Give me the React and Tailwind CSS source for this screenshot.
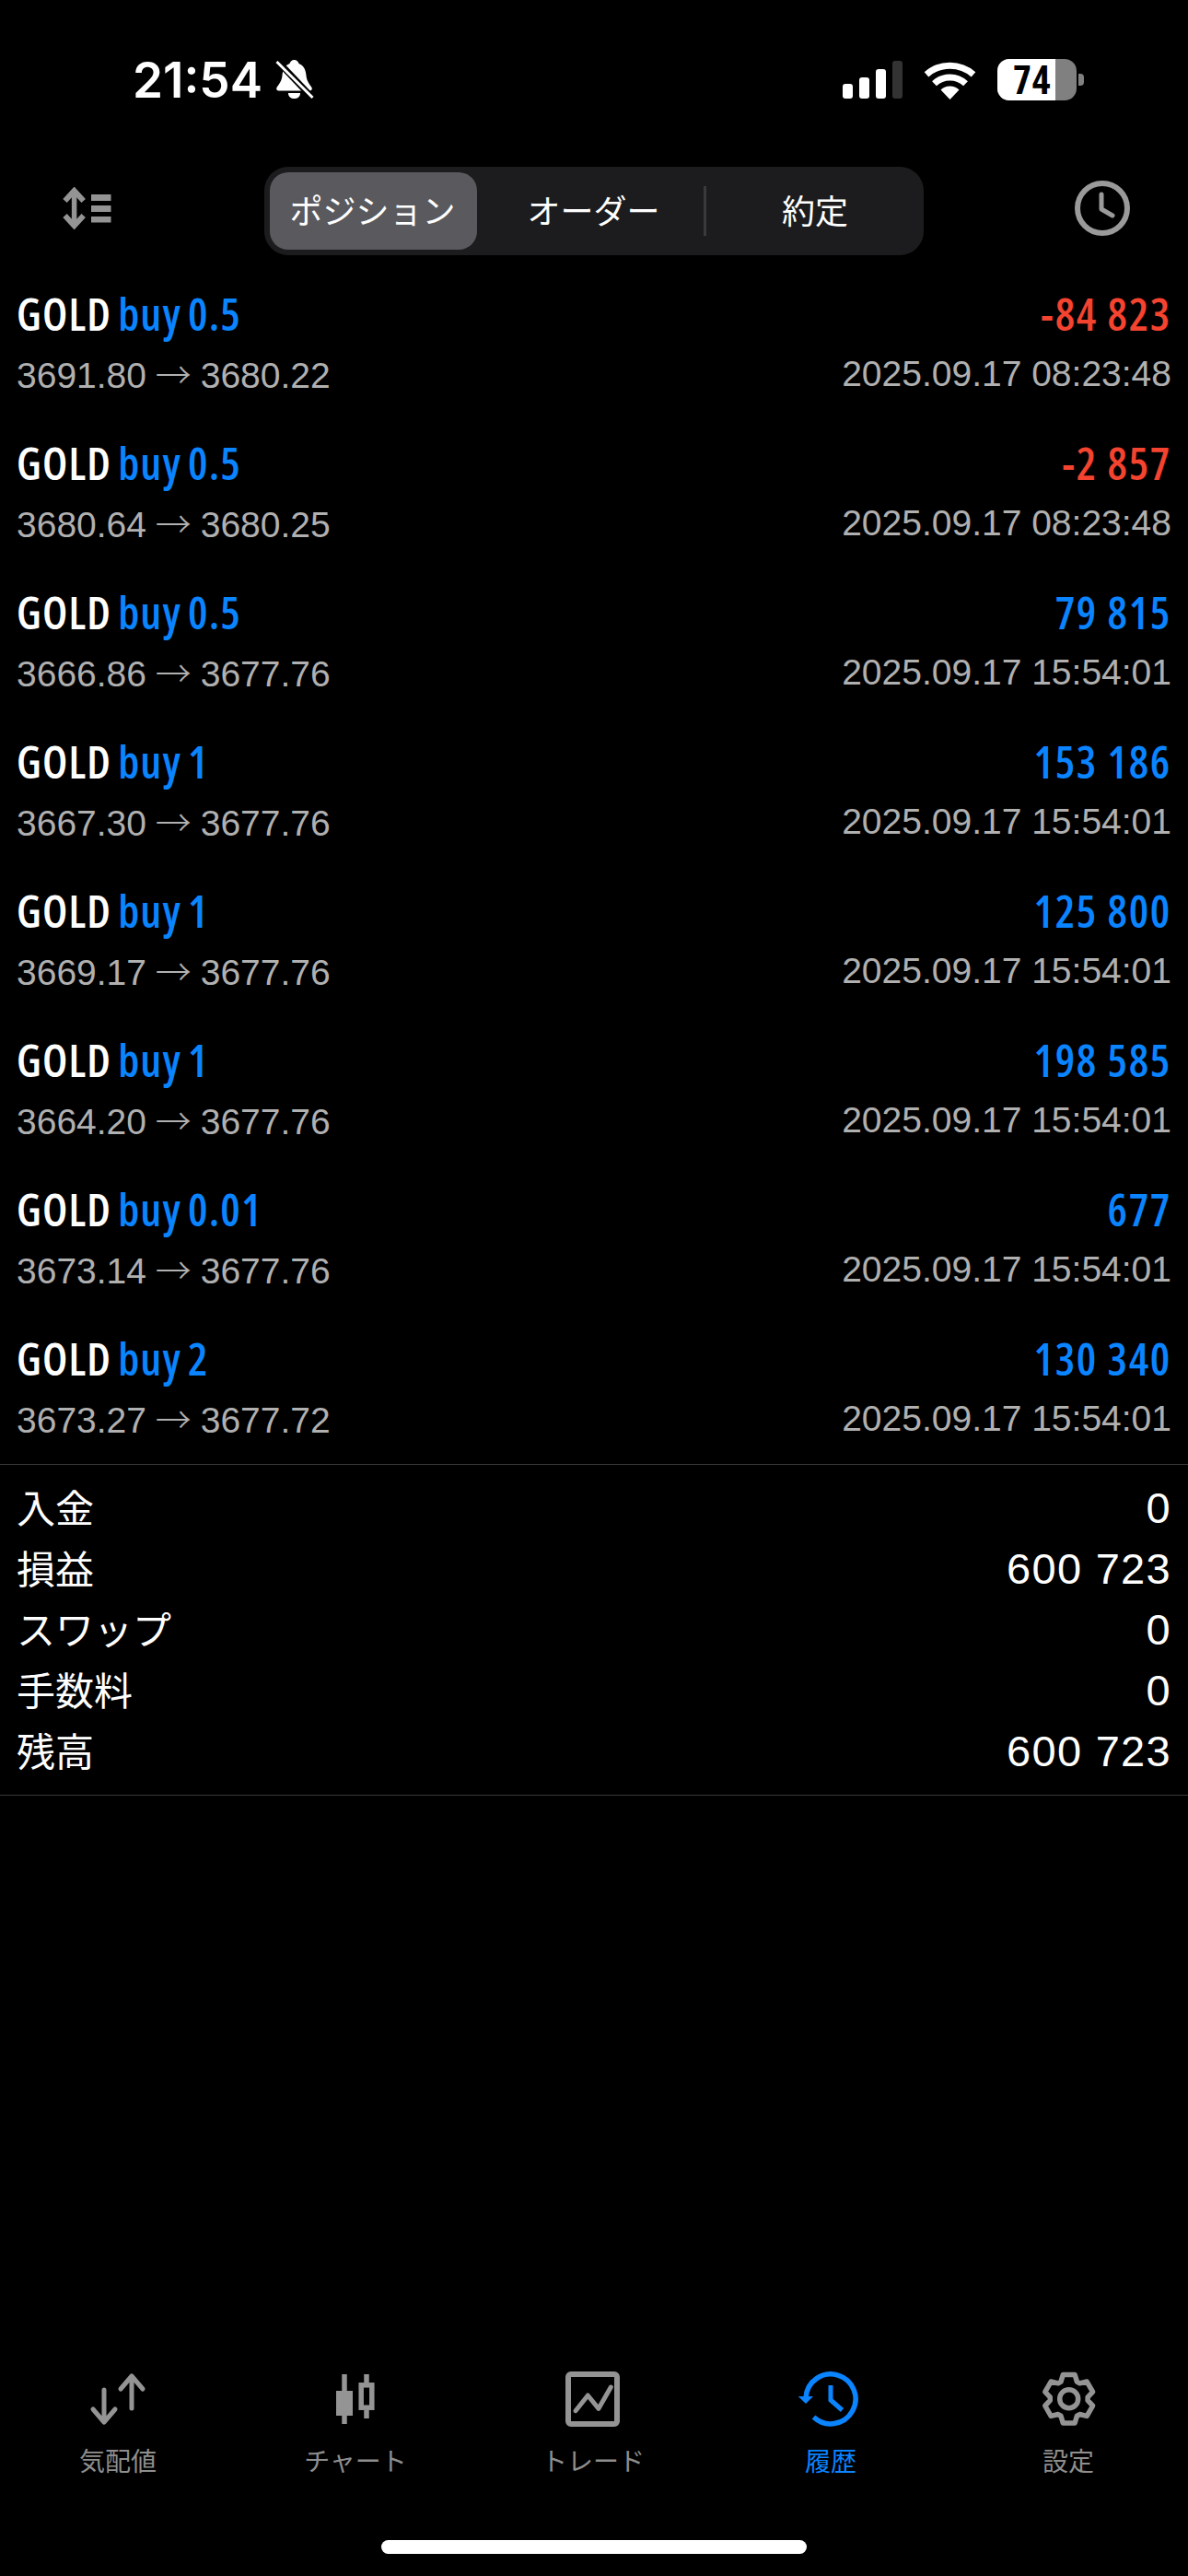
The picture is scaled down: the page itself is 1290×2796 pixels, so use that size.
import React from "react";

const trades = [
  { lot: "0.5", open: "3691.80", close: "3680.22", pnl: "-84 823", time: "2025.09.17 08:23:48" },
  { lot: "0.5", open: "3680.64", close: "3680.25", pnl: "-2 857", time: "2025.09.17 08:23:48" },
  { lot: "0.5", open: "3666.86", close: "3677.76", pnl: "79 815", time: "2025.09.17 15:54:01" },
  { lot: "1", open: "3667.30", close: "3677.76", pnl: "153 186", time: "2025.09.17 15:54:01" },
  { lot: "1", open: "3669.17", close: "3677.76", pnl: "125 800", time: "2025.09.17 15:54:01" },
  { lot: "1", open: "3664.20", close: "3677.76", pnl: "198 585", time: "2025.09.17 15:54:01" },
  { lot: "0.01", open: "3673.14", close: "3677.76", pnl: "677", time: "2025.09.17 15:54:01" },
  { lot: "2", open: "3673.27", close: "3677.72", pnl: "130 340", time: "2025.09.17 15:54:01" },
];

const summary = [
  ["入金", "0"],
  ["損益", "600 723"],
  ["スワップ", "0"],
  ["手数料", "0"],
  ["残高", "600 723"],
];

const GREY = "#949494";
const BLUE = "#0a84ff";

const gearPath = () => {
  const pts = [];
  for (let i = 0; i < 6; i++) {
    const a = (i * Math.PI) / 3 - Math.PI / 2;
    [[-0.44, 20.5], [-0.24, 27], [0.24, 27], [0.44, 20.5]].forEach(([d, r]) => {
      pts.push(`${(39.7 + r * Math.cos(a + d)).toFixed(2)} ${(29.7 + r * Math.sin(a + d)).toFixed(2)}`);
    });
  }
  return "M" + pts.join("L") + "Z";
};

function BellSlash() {
  return (
    <svg width="42" height="44" viewBox="0 0 42 44">
      <path d="M20.500 1C23 1 25 3 25.500 5C31 7 33 12 33.500 18C34 24 37 27 39.500 31C40.500 33 39 34.500 37 34.500H4C2 34.500 .5 33 1.500 31C4 27 7 24 7.500 18C8 12 10 7 15.500 5C16 3 18 1 20.500 1Z" fill="#fff" />
      <path d="M14 37H27C27 41 24 43 20.500 43C17 43 14 41 14 37Z" fill="#fff" />
      <path d="M2 2L40 42" stroke="#000" strokeWidth="7" />
      <path d="M1.500 3L40.500 42" stroke="#fff" strokeWidth="3" />
    </svg>
  );
}

function Signal() {
  return (
    <svg width="65" height="41" viewBox="0 0 65 41">
      <rect x="0" y="25" width="11" height="16" rx="3" fill="#fff" />
      <rect x="18" y="18" width="11" height="23" rx="3" fill="#fff" />
      <rect x="36" y="9" width="11" height="32" rx="3" fill="#fff" />
      <rect x="54" y="0" width="11" height="41" rx="3" fill="#333" />
    </svg>
  );
}

function Wifi() {
  return (
    <svg width="57" height="42" viewBox="0 0 57 42" fill="none" stroke="#fff" strokeWidth="7">
      <path d="M3 14.800A38.500 38.500 0 0 1 54 14.800" />
      <path d="M11.500 24.800A24.500 24.500 0 0 1 45.500 24.800" />
      <path d="M28.500 42L18.500 31.500A14.500 14.500 0 0 1 38.500 31.500Z" fill="#fff" stroke="none" />
    </svg>
  );
}

function Battery() {
  return (
    <div className="flex items-center">
      <div className="relative w-[86px] h-[45px] rounded-[13px] bg-[#808080]">
        <div className="w-[63px] h-full rounded-l-[13px] bg-white" />
        <span className="absolute left-[17px] top-[1px] text-[42px] leading-[42px] font-bold tracking-[1px] text-black font-['Open_Sans',sans-serif] [font-stretch:75%]">74</span>
      </div>
      <div className="ml-[2px] w-[6px] h-[13px] rounded-r-[4px] bg-[#808080]" />
    </div>
  );
}

function SortIcon() {
  return (
    <svg width="53" height="46" viewBox="0 0 53 46" fill="none" stroke={GREY}>
      <path d="M12.600 6V40" strokeWidth="5.500" />
      <path d="M2.500 15L12.600 4L22.700 15" strokeWidth="6" />
      <path d="M2.500 31L12.600 42L22.700 31" strokeWidth="6" />
      <g fill={GREY} stroke="none">
        <rect x="31" y="8" width="21.500" height="7" />
        <rect x="31" y="20" width="21.500" height="7" />
        <rect x="31" y="32" width="21.500" height="6.500" />
      </g>
    </svg>
  );
}

function ClockIcon() {
  return (
    <svg width="60" height="60" viewBox="0 0 60 60" fill="none" stroke="#9a9a9a">
      <circle cx="30" cy="30" r="27" strokeWidth="6" />
      <path d="M29 15V31L41 38" strokeWidth="5" strokeLinecap="round" strokeLinejoin="round" />
    </svg>
  );
}

function QuotesIcon() {
  return (
    <svg width="80" height="60" viewBox="0 0 80 60" fill="none" stroke={GREY} strokeWidth="5" strokeLinecap="round" strokeLinejoin="round">
      <path d="M24 20V54M12 41L24 55L36 41" />
      <path d="M54 40V6M42 19L54 5L66 19" />
    </svg>
  );
}

function ChartIcon() {
  return (
    <svg width="80" height="60" viewBox="0 0 80 60" fill="none" stroke={GREY} strokeWidth="5.500">
      <path d="M27 3V21M27 48V57" />
      <rect x="18" y="21" width="18" height="27" fill={GREY} stroke="none" />
      <path d="M51 3V12M51 42V51" />
      <rect x="45.200" y="14.800" width="11.600" height="24.400" />
    </svg>
  );
}

function TradeIcon() {
  return (
    <svg width="80" height="60" viewBox="0 0 80 60" fill="none" stroke={GREY} strokeLinecap="round" strokeLinejoin="round">
      <rect x="12" y="3" width="53" height="54" rx="3" strokeWidth="6" />
      <path d="M20 42.700L33.300 26L45 40.300L58.300 17" strokeWidth="5" />
    </svg>
  );
}

function HistoryIcon() {
  return (
    <svg width="80" height="60" viewBox="0 0 80 60" fill="none" stroke={BLUE} strokeWidth="5.500">
      <path d="M12.100 28A27 27 0 1 1 20.500 49.500" />
      <path d="M3.700 27H20L12 35Z" fill={BLUE} stroke="none" />
      <path d="M39 15V31L51.500 42" strokeWidth="5" />
    </svg>
  );
}

function GearIcon() {
  return (
    <svg width="80" height="60" viewBox="0 0 80 60" fill="none" stroke={GREY} strokeWidth="5.500" strokeLinejoin="round">
      <path d={gearPath()} />
      <circle cx="39.700" cy="29.700" r="10" />
    </svg>
  );
}

const tabs = [
  { label: "気配値", icon: <QuotesIcon /> },
  { label: "チャート", icon: <ChartIcon /> },
  { label: "トレード", icon: <TradeIcon /> },
  { label: "履歴", icon: <HistoryIcon />, active: true },
  { label: "設定", icon: <GearIcon /> },
];

export default function App() {
  return (
    <div className="w-[1290px] h-[2796px] bg-black text-white flex flex-col overflow-hidden font-['Liberation_Sans','Noto_Sans_CJK_JP',sans-serif]">
      <div className="h-[181px] shrink-0 flex items-start pt-[64px] pl-[144px]">
        <span className="text-[53px] leading-[46px] font-semibold font-['Inter',sans-serif]">21:54</span>
        <span className="ml-[14px]"><BellSlash /></span>
        <div className="ml-auto flex items-center gap-[23px] pr-[113px]">
          <Signal />
          <Wifi />
          <Battery />
        </div>
      </div>

      <div className="h-[96px] shrink-0 flex items-center pl-[68px]">
        <div className="mb-[6px]"><SortIcon /></div>
        <div className="ml-[166px] w-[716px] h-[96px] rounded-[26px] bg-[#1c1c1e] flex items-center pl-[6px] text-[36px] font-['Noto_Sans_CJK_JP',sans-serif]">
          <div className="w-[225px] h-[84px] pb-[4px] pr-[2px] rounded-[20px] bg-[#5a5a5e] flex items-center justify-center">ポジション</div>
          <div className="w-[246px] pb-[4px] pl-[7px] text-center">オーダー</div>
          <div className="w-[3px] h-[54px] bg-[#3a3a3c]" />
          <div className="flex-1 pb-[4px] text-center">約定</div>
        </div>
        <div className="ml-[164px] mb-[6px]"><ClockIcon /></div>
      </div>

      <div className="mt-[13px] mb-[3px] shrink-0">
        {trades.map((t, i) => (
          <div key={i} className="h-[162px] px-[18px] pt-[27px]">
            <div className="flex justify-between h-[48px] items-center text-[48px] leading-[48px] font-semibold font-['Open_Sans',sans-serif] [font-stretch:75%]">
              <div className="tracking-[1.2px] [word-spacing:-3px]">GOLD <span className="text-[#0a84ff]">buy {t.lot}</span></div>
              <div className={`tracking-[1.7px] ${t.pnl.startsWith("-") ? "text-[#f4432f]" : "text-[#0a84ff]"}`}>{t.pnl}</div>
            </div>
            <div className="flex justify-between mt-[17px] h-[48px] items-center text-[39px] leading-[48px] text-[#b0b0b0]">
              <div>{t.open} <span className="mx-[-1px] font-light font-['Noto_Sans_CJK_JP',sans-serif]">→</span> {t.close}</div>
              <div>{t.time}</div>
            </div>
          </div>
        ))}
      </div>

      <div className="shrink-0 border-y border-[#38383a] py-[14px] px-[18px]">
        {summary.map(([k, v]) => (
          <div key={k} className="h-[66px] flex items-center justify-between">
            <span className="text-[42px] leading-[62px] pb-[4px] font-['Noto_Sans_CJK_JP',sans-serif]">{k}</span>
            <span className="text-[47px] tracking-[1.3px]">{v}</span>
          </div>
        ))}
      </div>

      <div className="flex-1" />

      <div className="shrink-0 grid grid-cols-5">
        {tabs.map((t) => (
          <div key={t.label} className={`flex flex-col items-center ${t.active ? "text-[#0a84ff]" : "text-[#8e8e8e]"}`}>
            {t.icon}
            <span className="mt-[18px] pr-[2px] h-[36px] text-[28px] leading-[36px] font-['Noto_Sans_CJK_JP',sans-serif]">{t.label}</span>
          </div>
        ))}
      </div>

      <div className="shrink-0 mt-[69px] mb-[24px] mx-auto w-[462px] h-[15px] rounded-full bg-white" />
    </div>
  );
}
